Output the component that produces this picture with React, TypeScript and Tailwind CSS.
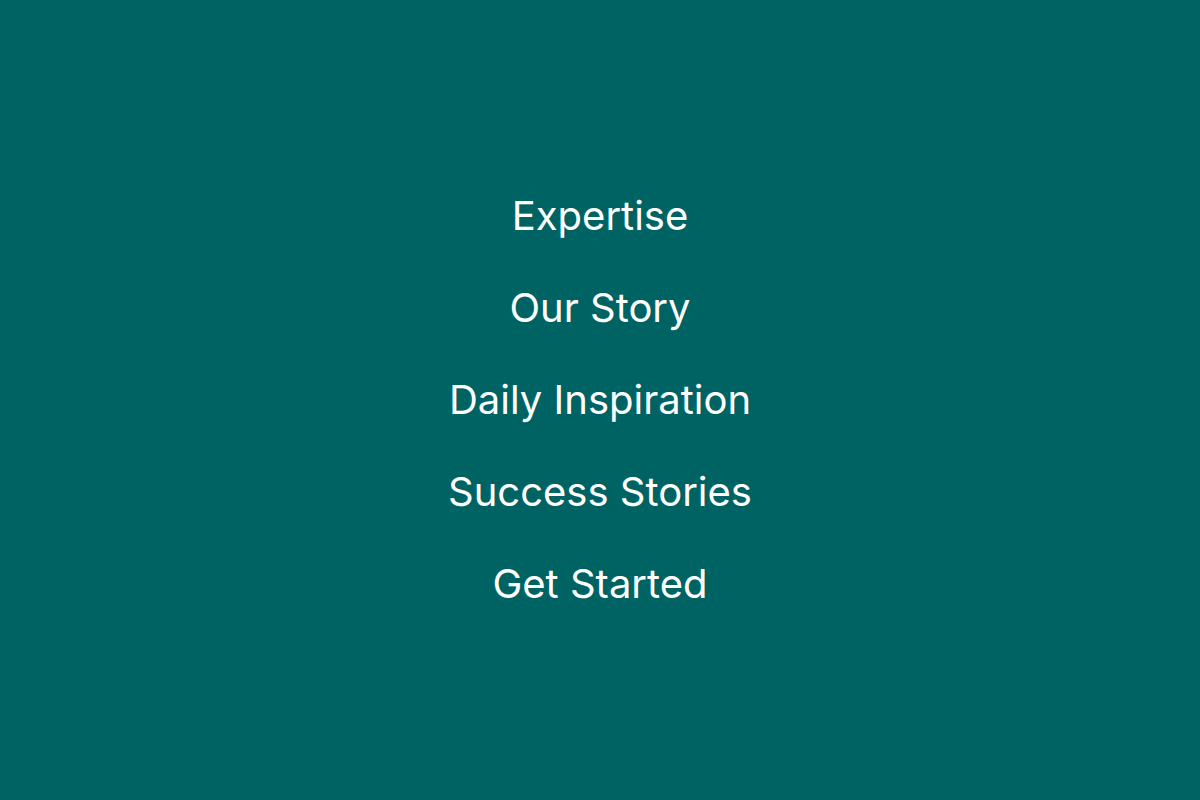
const links = ["Expertise", "Our Story", "Daily Inspiration", "Success Stories", "Get Started"]

export default function App() {
  return (
    <div className="min-h-screen w-full bg-[#006363] flex items-center justify-center font-['Inter',sans-serif]">
      <nav className="flex flex-col items-center gap-[44px]">
        {links.map((link) => (
          <a key={link} href="#" className="text-white text-[40px] leading-[48px]">
            {link}
          </a>
        ))}
      </nav>
    </div>
  )
}
